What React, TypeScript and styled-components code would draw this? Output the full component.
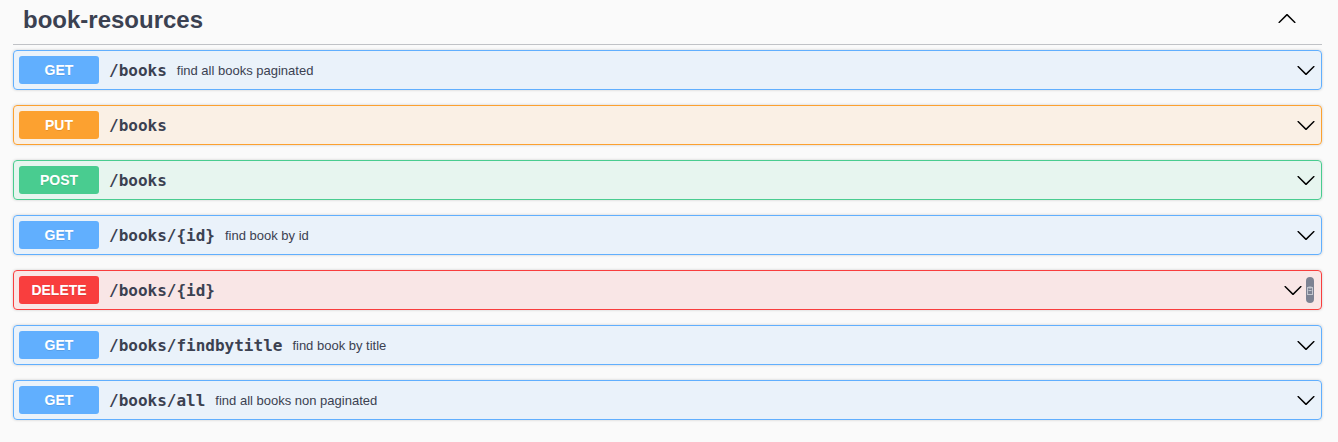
import React from "react";
import styled, { createGlobalStyle } from "styled-components";

type Method = "get" | "put" | "post" | "delete";

interface IOperation {
    method: Method;
    path: string;
    summary?: string;
    showCopy?: boolean;
}

const colors: Record<Method, string> = {
    get: "#61affe",
    put: "#fca130",
    post: "#49cc90",
    delete: "#f93e3e",
};

const backgrounds: Record<Method, string> = {
    get: "rgba(97, 175, 254, 0.1)",
    put: "rgba(252, 161, 48, 0.1)",
    post: "rgba(73, 204, 144, 0.1)",
    delete: "rgba(249, 62, 62, 0.1)",
};

const operations: IOperation[] = [
    { method: "get", path: "/books", summary: "find all books paginated" },
    { method: "put", path: "/books" },
    { method: "post", path: "/books" },
    { method: "get", path: "/books/{id}", summary: "find book by id" },
    { method: "delete", path: "/books/{id}", showCopy: true },
    { method: "get", path: "/books/findbytitle", summary: "find book by title" },
    { method: "get", path: "/books/all", summary: "find all books non paginated" },
];

const Arrow: React.FC<{ up?: boolean }> = ({ up }) => (
    <ArrowSvg viewBox="0 0 20 20" $up={up}>
        <path d="M17.418 6.109c.272-.268.709-.268.979 0s.271.701 0 .969l-7.908 7.83c-.27.268-.707.268-.979 0l-7.908-7.83c-.27-.268-.27-.701 0-.969.271-.268.709-.268.979 0L10 13.25l7.418-7.141z" />
    </ArrowSvg>
);

const Operation: React.FC<IOperation> = ({ method, path, summary, showCopy }) => (
    <Block $method={method}>
        <Badge $method={method}>{method.toUpperCase()}</Badge>
        <Path>{path}</Path>
        {summary && <Summary>{summary}</Summary>}
        <Spacer />
        <Arrow />
        {showCopy && (
            <CopyButton>
                <svg width="6" height="9" viewBox="0 0 6 9">
                    <rect x="0.5" y="1.5" width="5" height="7" fill="none" stroke="#c3c6cf" strokeWidth="1" />
                    <rect x="1.5" y="0.5" width="3" height="2" fill="#c3c6cf" />
                    <rect x="1.5" y="4" width="3" height="1" fill="#c3c6cf" />
                </svg>
            </CopyButton>
        )}
    </Block>
);

const App: React.FC = () => (
    <>
        <GlobalStyle />
        <Page>
            <Section>
                <TagHeader>
                    <TagTitle>book-resources</TagTitle>
                    <Arrow up />
                </TagHeader>
                {operations.map((op, i) => (
                    <Operation key={i} {...op} />
                ))}
            </Section>
        </Page>
    </>
);

const GlobalStyle = createGlobalStyle`
    html, body {
        margin: 0;
        padding: 0;
        background: #fafafa;
    }
    body {
        font-family: "Liberation Sans", Arial, sans-serif;
        color: #3b4151;
    }
`;

const Page = styled.div`
    width: 1338px;
    height: 442px;
    overflow: hidden;
    background: #fafafa;
`;

const Section = styled.div`
    margin-left: 13px;
    width: 1309px;
`;

const TagHeader = styled.div`
    display: flex;
    align-items: center;
    height: 45px;
    box-sizing: border-box;
    padding: 0 25px 0 10px;
    border-bottom: 1px solid rgba(59, 65, 81, 0.3);
    margin-bottom: 5px;
`;

const TagTitle = styled.h3`
    flex: 1;
    margin: 0;
    padding-bottom: 6px;
    font-size: 24px;
    line-height: 27px;
    font-weight: 700;
    color: #3b4151;
`;

const ArrowSvg = styled.svg<{ $up?: boolean }>`
    width: 20px;
    height: 20px;
    flex-shrink: 0;
    fill: #000;
    transform: ${(p) => (p.$up ? "rotate(180deg)" : "none")};
    margin-top: ${(p) => (p.$up ? "-7px" : "0")};
`;

const Block = styled.div<{ $method: Method }>`
    display: flex;
    align-items: center;
    height: 40px;
    box-sizing: border-box;
    padding: 5px;
    margin-bottom: 15px;
    border: 1px solid ${(p) => colors[p.$method]};
    border-radius: 4px;
    background: ${(p) => backgrounds[p.$method]};
    box-shadow: 0 0 3px rgba(0, 0, 0, 0.19);
`;

const Badge = styled.div<{ $method: Method }>`
    width: 80px;
    height: 28px;
    flex-shrink: 0;
    display: flex;
    align-items: center;
    justify-content: center;
    border-radius: 3px;
    background: ${(p) => colors[p.$method]};
    color: #fff;
    font-size: 14px;
    font-weight: 700;
    text-shadow: 0 1px 0 rgba(0, 0, 0, 0.1);
`;

const Path = styled.span`
    padding: 0 10px;
    font-family: "DejaVu Sans Mono", monospace;
    font-size: 16px;
    font-weight: 700;
    color: #3b4151;
`;

const Summary = styled.span`
    font-size: 13px;
    color: #3b4151;
`;

const Spacer = styled.div`
    flex: 1;
`;

const CopyButton = styled.div`
    width: 8px;
    height: 26px;
    margin: 0 2px 0 3px;
    border-radius: 4px;
    background: #7d8293;
    display: flex;
    align-items: center;
    justify-content: center;
    overflow: hidden;
`;

export default App;
